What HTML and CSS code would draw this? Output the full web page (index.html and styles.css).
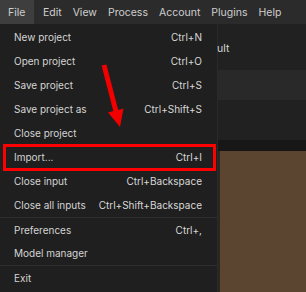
FILE: index.html
```html
<!doctype html>
<html lang="en">
<head>
  <meta charset="UTF-8">
  <title>File menu</title>
  <link rel="stylesheet" href="styles.css">
</head>
<body>

  <div class="menubar">
    <span class="top active">File</span>
    <span class="top">Edit</span>
    <span class="top">View</span>
    <span class="top">Process</span>
    <span class="top">Account</span>
    <span class="top">Plugins</span>
    <span class="top">Help</span>
  </div>

  <div class="main">
    <ul class="dropdown">
      <li><span>New project</span><span class="key">Ctrl+N</span></li>
      <li><span>Open project</span><span class="key">Ctrl+O</span></li>
      <li><span>Save project</span><span class="key">Ctrl+S</span></li>
      <li><span>Save project as</span><span class="key">Ctrl+Shift+S</span></li>
      <li><span>Close project</span></li>
      <li class="marked"><span>Import...</span><span class="key">Ctrl+I</span></li>
      <li><span>Close input</span><span class="key">Ctrl+Backspace</span></li>
      <li><span>Close all inputs</span><span class="key">Ctrl+Shift+Backspace</span></li>
      <li class="sep"><span>Preferences</span><span class="key">Ctrl+,</span></li>
      <li><span>Model manager</span></li>
      <li class="sep"><span>Exit</span></li>
    </ul>

    <div class="workspace">
      <div class="preset">ult</div>
      <div class="panel"></div>
      <div class="gap"></div>
      <div class="strip"></div>
      <div class="preview"></div>
    </div>
  </div>

  <!-- annotation arrow -->
  <svg class="arrow" width="306" height="292" viewBox="0 0 306 292">
    <polygon fill="#f20000" points="106.4,64.4 101.6,65.6 113.3,111.1 108,112.5 120,127 123.5,108.5 118.2,109.9"/>
  </svg>

</body>
</html>
```

FILE: styles.css
```css
body {
  margin: 0;
  width: 306px;
  height: 292px;
  overflow: hidden;
  background: #1c1c1c;
  font-family: Inter, 'Noto Sans', sans-serif;
  color: #d2d2d2;
  position: relative;
}

.menubar {
  display: flex;
  height: 24px;
  background: #2b2b2b;
  font-size: 10.5px;
  white-space: nowrap;
}
.top {
  display: flex;
  align-items: center;
  padding: 0 5.5px;
  color: #cfcfcf;
}
.top.active {
  background: #3e3e3e;
  padding: 0 9px 0 8px;
  margin-right: 3px;
}

.main {
  display: flex;
  height: 268px;
}

.dropdown {
  list-style: none;
  margin: 0;
  padding: 1px 0 2px;
  width: 217px;
  background: #1f1f1f;
  font-size: 10px;
  flex: none;
  white-space: nowrap;
}
.dropdown li {
  display: flex;
  justify-content: space-between;
  align-items: center;
  height: 24px;
  padding: 0 15px 0 14px;
  box-sizing: border-box;
  color: #d4d4d4;
}
.dropdown li.sep {
  border-top: 1px solid #2e2e2e;
}
.key {
  color: #d8d8d8;
}
.marked {
  position: relative;
}
.marked::after {
  content: "";
  position: absolute;
  top: -1px;
  bottom: -2px;
  left: 3px;
  right: 1px;
  border: 3px solid #ff0000;
}

.workspace {
  flex: 1;
  display: flex;
  flex-direction: column;
  background: #212121;
  border-left: 1px solid #2a2a2a;
}
.preset {
  height: 46px;
  padding-top: 18px;
  box-sizing: border-box;
  margin-left: -1px;
  font-size: 10.5px;
  color: #d6d6d6;
}
.panel {
  height: 30px;
  background: #292929;
}
.gap {
  height: 40px;
}
.strip {
  height: 11px;
  background: #171717;
}
.preview {
  flex: 1;
  background: #5b4530;
  border-left: 2px solid #2a2620;
}

.arrow {
  position: absolute;
  left: 0;
  top: 0;
}
```
